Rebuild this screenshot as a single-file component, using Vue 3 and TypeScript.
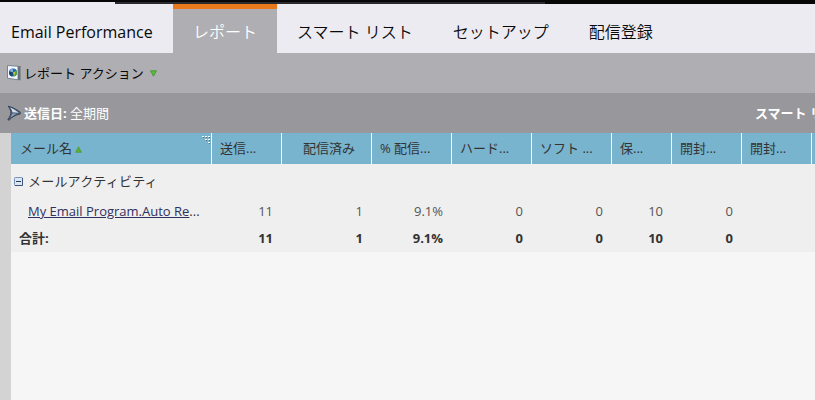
<script setup lang="ts">
interface Column {
  label: string
  value: string
  total: string
  width: number
  align?: 'right'
}

const tabs: string[] = ['レポート', 'スマート リスト', 'セットアップ', '配信登録']
const activeTab = 'レポート'

const columns: Column[] = [
  { label: '送信...', value: '11', total: '11', width: 70 },
  { label: '配信済み', value: '1', total: '1', width: 90, align: 'right' },
  { label: '% 配信...', value: '9.1%', total: '9.1%', width: 80 },
  { label: 'ハード...', value: '0', total: '0', width: 80 },
  { label: 'ソフト ...', value: '0', total: '0', width: 80 },
  { label: '保...', value: '10', total: '10', width: 60 },
  { label: '開封...', value: '0', total: '0', width: 70 },
  { label: '開封...', value: '', total: '', width: 70 },
  { label: '', value: '', total: '', width: 70 },
]

const gridColumns = ['201px', ...columns.map((c) => `${c.width}px`)].join(' ')
</script>

<template>
  <div class="app">
    <div class="topline"><span class="topline-edge"></span><span class="topline-shade"></span></div>
    <nav class="tabs">
      <div class="title">Email Performance</div>
      <div v-for="tab in tabs" :key="tab" class="tab" :class="{ active: tab === activeTab }">{{ tab }}</div>
    </nav>

    <div class="toolbar">
      <svg class="icon" width="14" height="16" viewBox="0 0 14 16">
        <path d="M.5 .5 11 1.2V14.8L.5 13.2Z" fill="#f3f7fb" stroke="#75838f" />
        <path d="M11 1.2 13.5 .8V15.5L11 14.8Z" fill="#66717c" />
        <circle cx="6" cy="7.6" r="4" fill="#2467a5" />
        <path d="M6 7.6V3.6A4 4 0 0 0 2.2 6.5Z" fill="#78aede" />
        <path d="M6 7.6 2.2 6.3A4 4 0 0 0 5 11.4Z" fill="#18466e" />
        <path d="M6 7.4 9.3 5.4A4 4 0 0 1 6.5 11.5Z" fill="#55a52d" />
        <path d="M6 7.5 8.6 6.5 7.3 10.4Z" fill="#c5c83f" />
      </svg>
      <span class="toolbar-label">レポート アクション</span>
      <svg class="caret" width="7" height="7" viewBox="0 0 7 7">
        <path d="M.5 .8H6.5L3.5 6.2Z" fill="#55bd38" stroke="#40952f" stroke-width=".8" />
      </svg>
    </div>

    <div class="filter">
      <svg class="icon" width="15" height="17" viewBox="0 0 15 17">
        <path d="M1.2 1.2C4.5 1.5 9 4.2 13.3 7.2L13.2 9C8.8 9.7 5 12 2 15.3L.8 14.6C3 11.8 4.2 9 3.8 6.4 3.4 4.3 2 2.7 1.2 1.2Z" fill="#50627b" stroke="#29384d" stroke-width=".8" />
        <path d="M3 2.4C6 3.5 9 5.6 11.8 7.8L5.4 7.2C5.2 5 4.2 3.6 3 2.4Z" fill="#d7e0ea" />
        <path d="M5.3 8.5 9.5 8.6 3.6 12.4Z" fill="#8c9db3" />
      </svg>
      <span class="filter-text"><b>送信日:</b> 全期間</span>
      <span class="smart-list">スマート リスト</span>
    </div>

    <main class="report">
      <div class="grid">
        <div class="row head" :style="{ gridTemplateColumns: gridColumns }">
          <div class="cell name">
            メール名
            <svg class="sort" width="7" height="7" viewBox="0 0 7 7">
              <path d="M3.5 .8 6.4 6.3H.6Z" fill="#5fae34" stroke="#4b9830" stroke-width=".7" />
            </svg>
            <svg class="grip" width="9" height="9" viewBox="0 0 9 9" shape-rendering="crispEdges">
              <path d="M0 0h2v1H0zM3 0h2v1H3zM6 0h2v1H6zM3 3h2v1H3zM6 3h2v1H6zM6 6h2v1H6z" fill="#fff" />
              <path d="M1 1h1v1H1zM4 1h1v1H4zM7 1h1v1H7zM4 4h1v1H4zM7 4h1v1H7zM7 7h1v1H7z" fill="#566b76" />
            </svg>
          </div>
          <div v-for="(col, i) in columns" :key="i" class="cell" :class="col.align">{{ col.label }}</div>
        </div>
        <div class="group">
          <svg width="9" height="9" viewBox="0 0 9 9">
            <rect x=".5" y=".5" width="8" height="8" rx=".8" fill="#dce6f3" stroke="#7b91b5" />
            <path d="M1 8.5H8.5V1" fill="none" stroke="#3e557b" />
            <path d="M2 4.5H7" stroke="#243b60" />
          </svg>
          <span>メールアクティビティ</span>
        </div>
        <div class="row data" :style="{ gridTemplateColumns: gridColumns }">
          <div class="program"><a>My Email Program.Auto Re</a>...</div>
          <div v-for="(col, i) in columns" :key="i" class="num">{{ col.value }}</div>
        </div>
        <div class="row total" :style="{ gridTemplateColumns: gridColumns }">
          <div class="total-label">合計:</div>
          <div v-for="(col, i) in columns" :key="i" class="num">{{ col.total }}</div>
        </div>
      </div>
    </main>
  </div>
</template>

<style>
body {
  overflow: hidden;
}
</style>

<style scoped>
.app {
  display: flex;
  flex-direction: column;
  width: 100%;
  height: 400px;
  overflow: hidden;
  box-sizing: border-box;
  font-family: 'Open Sans', 'Noto Sans CJK JP', sans-serif;
  font-size: 13px;
  line-height: 20px;
  color: #333;
  white-space: nowrap;
  background: #f6f6f6;
}
.topline {
  display: flex;
  align-items: flex-end;
  flex: 0 0 4px;
  background: #070708;
}
.topline-edge {
  width: 115px;
  height: 2px;
  background: #ecebf1;
}
.topline-shade {
  width: 430px;
  height: 2px;
  background: #2b2b2f;
}
.tabs {
  display: flex;
  flex: 0 0 49px;
  background: #ecebf1;
  color: #080808;
  font-size: 16px;
}
.title {
  box-sizing: border-box;
  width: 173px;
  padding: 18px 0 0 11px;
}
.tab {
  box-sizing: border-box;
  padding: 18px 20px 0;
  font-weight: 350;
}
.tab.active {
  border-top: 5px solid #e8781c;
  padding-top: 13px;
  background: #afaeb2;
  color: #fff;
}
.icon {
  flex: none;
}
.toolbar,
.filter {
  display: flex;
  align-items: center;
  flex: 0 0 40px;
  padding-left: 7px;
}
.toolbar {
  background: #afaeb2;
  color: #080808;
}
.toolbar-label {
  margin-left: 3px;
}
.caret {
  margin-left: 6px;
}
.filter {
  background: #98979b;
  color: #fff;
}
.filter-text {
  flex: none;
  width: 731px;
  margin-left: 2px;
}
.smart-list {
  flex: none;
  font-weight: 700;
}
.report {
  flex: 1;
  padding-left: 11px;
  background: linear-gradient(90deg, #d3d3d3 11px, #f6f6f6 11px);
}
.grid {
  height: 119px;
  background: #efefef;
  overflow: hidden;
}
.row {
  display: grid;
}
.head {
  height: 31px;
  width: max-content;
  background: #79b4ce;
}
.cell {
  padding: 5px 7px 0 8px;
  border-right: 1px solid #fff;
  overflow: hidden;
}
.cell.right {
  text-align: right;
  padding-right: 16px;
}
.cell.name {
  position: relative;
  padding-left: 9px;
}
.sort {
  margin-left: 0;
}
.grip {
  position: absolute;
  top: 3px;
  right: 0;
}
.group {
  display: flex;
  align-items: center;
  gap: 5px;
  height: 34px;
  padding-left: 3px;
  letter-spacing: 0.2px;
}
.data {
  height: 27px;
  line-height: 27px;
  color: #555;
}
.program {
  padding-left: 17px;
  color: #333;
}
.program a {
  color: #30305e;
  text-decoration: underline;
}
.total {
  height: 27px;
  line-height: 27px;
  font-weight: 700;
}
.total-label {
  padding-left: 8px;
}
.num {
  padding-right: 9px;
  text-align: right;
}
</style>
